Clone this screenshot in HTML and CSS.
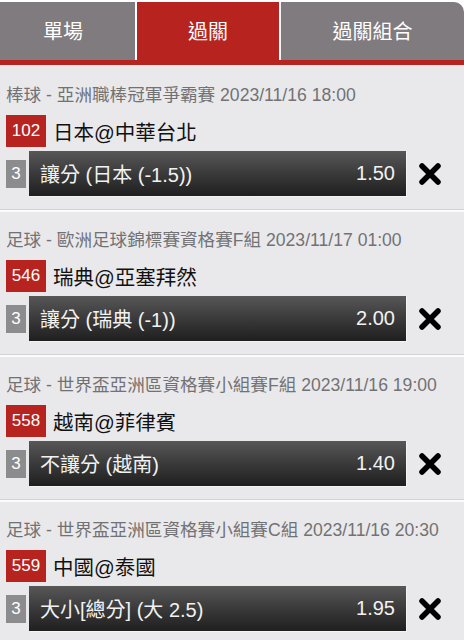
FILE: index.html
```html
<!doctype html>
<html lang="zh-Hant">
  <head>
    <meta charset="UTF-8" />
    <meta name="viewport" content="width=device-width, initial-scale=1.0" />
    <title>過關</title>
    <link rel="stylesheet" href="styles.css">
  </head>
  <body>
    <nav class="tabs">
      <div class="tab tab-single">單場</div>
      <div class="tab tab-active">過關</div>
      <div class="tab tab-combo">過關組合</div>
    </nav>

    <div class="slip">
      <section class="match">
        <div class="league">棒球 - 亞洲職棒冠軍爭霸賽 2023/11/16 18:00</div>
        <div class="teams"><span class="match-no">102</span>日本@中華台北</div>
        <div class="bet">
          <span class="pool">3</span>
          <div class="bet-bar"><span>讓分 (日本 (-1.5))</span><span>1.50</span></div>
          <button class="remove" aria-label="remove">
            <svg viewBox="0 0 24 22" width="24" height="22"><path d="M4 3 L20 19 M20 3 L4 19" /></svg>
          </button>
        </div>
      </section>

      <section class="match">
        <div class="league">足球 - 歐洲足球錦標賽資格賽F組 2023/11/17 01:00</div>
        <div class="teams"><span class="match-no">546</span>瑞典@亞塞拜然</div>
        <div class="bet">
          <span class="pool">3</span>
          <div class="bet-bar"><span>讓分 (瑞典 (-1))</span><span>2.00</span></div>
          <button class="remove" aria-label="remove">
            <svg viewBox="0 0 24 22" width="24" height="22"><path d="M4 3 L20 19 M20 3 L4 19" /></svg>
          </button>
        </div>
      </section>

      <section class="match">
        <div class="league">足球 - 世界盃亞洲區資格賽小組賽F組 2023/11/16 19:00</div>
        <div class="teams"><span class="match-no">558</span>越南@菲律賓</div>
        <div class="bet">
          <span class="pool">3</span>
          <div class="bet-bar"><span>不讓分 (越南)</span><span>1.40</span></div>
          <button class="remove" aria-label="remove">
            <svg viewBox="0 0 24 22" width="24" height="22"><path d="M4 3 L20 19 M20 3 L4 19" /></svg>
          </button>
        </div>
      </section>

      <section class="match">
        <div class="league">足球 - 世界盃亞洲區資格賽小組賽C組 2023/11/16 20:30</div>
        <div class="teams"><span class="match-no">559</span>中國@泰國</div>
        <div class="bet">
          <span class="pool">3</span>
          <div class="bet-bar"><span>大小[總分] (大 2.5)</span><span>1.95</span></div>
          <button class="remove" aria-label="remove">
            <svg viewBox="0 0 24 22" width="24" height="22"><path d="M4 3 L20 19 M20 3 L4 19" /></svg>
          </button>
        </div>
      </section>
    </div>
  </body>
</html>
```

FILE: styles.css
```css
:root {
  --color-tab: #807b7e;
  --color-red: #b7241f;
  --color-bg: #e9e9ec;
  --color-muted: #727274;
  --color-text: #111;
  --font-main: "Liberation Sans", "Noto Sans CJK TC", sans-serif;
}

body {
  margin: 0;
  background: var(--color-bg);
  font-family: var(--font-main);
  color: var(--color-text);
  overflow: hidden;
}

.tabs {
  display: flex;
  gap: 2px;
  padding-top: 2px;
  background: #fff;
  border-bottom: 5px solid var(--color-red);
}

.tab {
  height: 58px;
  display: flex;
  align-items: center;
  justify-content: center;
  color: #fff;
  font-size: 20px;
  background: var(--color-tab);
  padding-bottom: 2px;
  box-sizing: border-box;
}

.tab-single {
  width: 135px;
  padding-right: 9px;
}

.tab-active {
  width: 142px;
  background: var(--color-red);
}

.tab-combo {
  flex: 1;
  border-top-right-radius: 10px;
}

.match {
  padding: 18px 0 13px;
  border-top: 2px solid #fbfbfc;
  border-bottom: 1px solid #d3d3d6;
}

.match:first-child {
  padding-top: 20px;
  border-top: none;
}

.league {
  padding-left: 6px;
  font-size: 17.6px;
  line-height: 20px;
  color: var(--color-muted);
  white-space: nowrap;
}

.teams {
  display: flex;
  align-items: center;
  gap: 7px;
  margin-top: 10px;
  padding-left: 6px;
  height: 32px;
  font-size: 20.5px;
}

.match-no {
  width: 40px;
  height: 32px;
  display: flex;
  align-items: center;
  justify-content: center;
  background: var(--color-red);
  color: #fff;
  font-size: 17px;
}

.bet {
  display: flex;
  align-items: center;
  margin-top: 4px;
  padding-left: 6px;
  height: 45px;
}

.pool {
  width: 20px;
  height: 28px;
  display: flex;
  align-items: center;
  justify-content: center;
  background: #8c8c8e;
  color: #fff;
  font-size: 17px;
  margin-right: 3px;
}

.bet-bar {
  width: 377px;
  height: 45px;
  box-sizing: border-box;
  display: flex;
  align-items: center;
  justify-content: space-between;
  padding: 0 11px;
  background: linear-gradient(#575757, #3a3a3a 50%, #1f1f1f);
  box-shadow: 1px 1px 0 #f4f4f4;
  color: #f2f2f2;
  font-size: 20px;
}

.remove {
  margin-left: 12px;
  padding: 0;
  border: none;
  background: none;
  display: flex;
}

.remove path {
  stroke: #000;
  stroke-width: 5.5;
  stroke-linecap: round;
  fill: none;
}
```
